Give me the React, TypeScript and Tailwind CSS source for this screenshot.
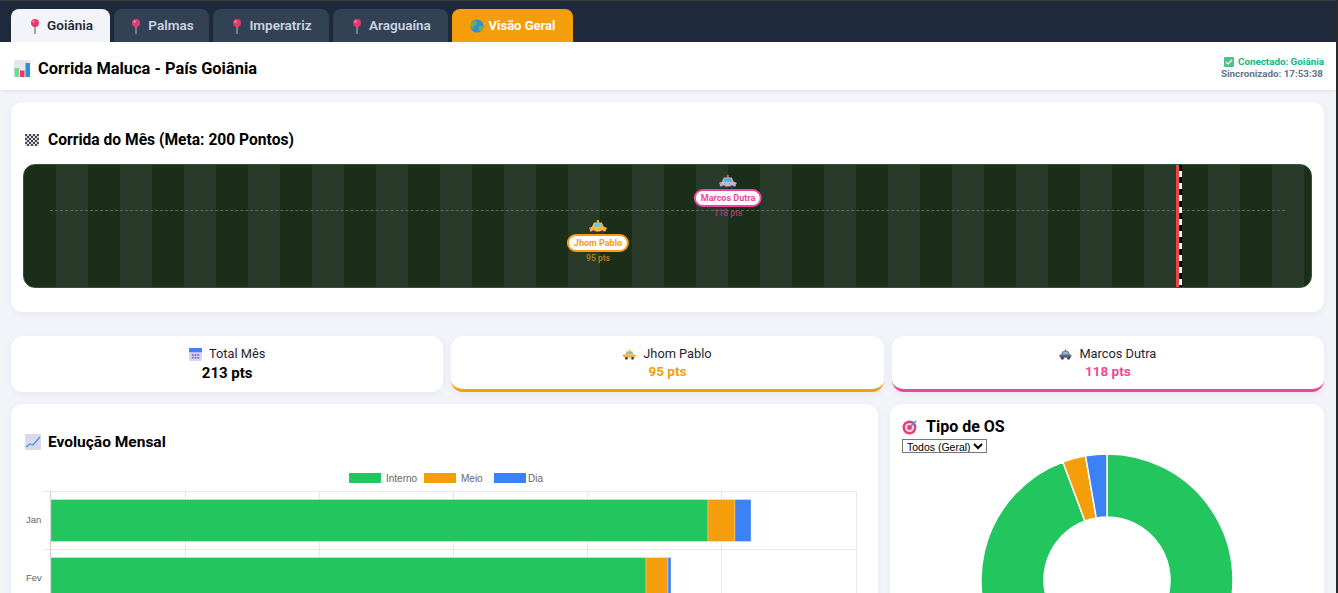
const FONT = "font-['Roboto','Noto_Sans',sans-serif]";

const tabs = [
  { label: "Goiânia", width: "w-[99px]", active: true },
  { label: "Palmas", width: "w-[95px]" },
  { label: "Imperatriz", width: "w-[116px]" },
  { label: "Araguaína", width: "w-[115px]" },
];

const Pin = () => (
  <svg viewBox="0 0 14 16" className="w-[14px] h-[16px] shrink-0">
    <rect x="6.2" y="7" width="1.6" height="9" fill="#8b8f98" />
    <circle cx="7" cy="5" r="4" fill="#e8386d" />
    <circle cx="5.6" cy="3.6" r="1.1" fill="#f9a3bd" />
  </svg>
);

const Globe = () => (
  <svg viewBox="0 0 16 16" className="w-[14px] h-[14px] shrink-0">
    <circle cx="8" cy="8" r="7.5" fill="#2f8fd8" />
    <path d="M3 3c2-1 4-1 5 0s0 3-2 4-1 3-2 4-3-1-3-3 1-4 2-5zM10 8c2-1 4 0 5 1 0 3-2 5-4 5-1-2-2-4-1-6z" fill="#6fb04a" />
  </svg>
);

const Chart = () => (
  <svg viewBox="0 0 16 17" className="w-[16px] h-[17px] shrink-0">
    <rect x="0" y="0" width="16" height="17" rx="1" fill="#e4e6ec" />
    <rect x="0.5" y="8" width="4.5" height="9" fill="#7fd39a" />
    <rect x="6" y="10.5" width="4.5" height="6.5" fill="#e8386d" />
    <rect x="11.5" y="3" width="4.5" height="14" fill="#2f8fd8" />
  </svg>
);

const Flag = () => (
  <svg viewBox="0 0 14 12" className="w-[14px] h-[12px] shrink-0">
    <rect width="14" height="12" fill="#d6d6dc" />
    {[0, 1, 2, 3, 4, 5].map((r) =>
      [0, 1, 2, 3, 4, 5, 6].map((c) =>
        (r + c) % 2 === 0 ? <rect key={`${r}-${c}`} x={c * 2} y={r * 2} width="2" height="2" fill="#4a4a55" /> : null,
      ),
    )}
  </svg>
);

const Calendar = () => (
  <svg viewBox="0 0 14 14" className="w-[13px] h-[13px] shrink-0">
    <rect width="14" height="14" rx="1.5" fill="#d9d5f2" />
    <rect width="14" height="4.5" rx="1" fill="#3b82f6" />
    {[3, 6, 9].map((x) =>
      [6.5, 9.5].map((y) => <rect key={`${x}-${y}`} x={x} y={y} width="2" height="2" fill="#7c72c9" />),
    )}
  </svg>
);

const Trend = () => (
  <svg viewBox="0 0 16 16" className="w-[16px] h-[16px] shrink-0">
    <rect width="16" height="16" rx="1" fill="#dcd8ea" />
    <path d="M1 13l4-3 3 1 7-8" fill="none" stroke="#3b9be8" strokeWidth="1.3" />
  </svg>
);

const Target = () => (
  <svg viewBox="0 0 16 16" className="w-[16px] h-[16px] shrink-0">
    <circle cx="7.5" cy="8.5" r="7" fill="#e0407b" />
    <circle cx="7.5" cy="8.5" r="4.6" fill="#f3d3df" />
    <circle cx="7.5" cy="8.5" r="2.4" fill="#e0407b" />
    <path d="M8 8l6-6" stroke="#3b9be8" strokeWidth="1.6" />
  </svg>
);

const Check = () => (
  <svg viewBox="0 0 10 10" className="w-[10px] h-[10px] shrink-0">
    <rect width="10" height="10" rx="1" fill="#4cc38a" />
    <path d="M2 5l2 2 4-4" fill="none" stroke="#fff" strokeWidth="1.2" />
  </svg>
);

// carro visto de frente: teto, para-brisa, corpo e rodas
const Car = ({ body, glass, top, size = "w-[18px] h-[14px]" }: { body: string; glass: string; top: string; size?: string }) => (
  <svg viewBox="0 0 18 14" className={size}>
    <rect x="8" y="0" width="2" height="3" fill={top} />
    <path d="M5 2.5h8l2 4.5H3z" fill={body} />
    <path d="M6 3.5h6l1.2 3H4.8z" fill={glass} />
    <rect x="1" y="7" width="16" height="4.5" rx="1" fill={body} />
    <rect x="0" y="7.5" width="2" height="1.5" fill="#e85d4a" />
    <rect x="16" y="7.5" width="2" height="1.5" fill="#e8b04a" />
    <rect x="3" y="10.5" width="3.5" height="3.5" rx="1.2" fill="#3a2f55" />
    <rect x="11.5" y="10.5" width="3.5" height="3.5" rx="1.2" fill="#3a2f55" />
  </svg>
);

const Stat = ({ icon, label, value, valueClass, accent }: { icon: React.ReactNode; label: string; value: string; valueClass: string; accent?: string }) => (
  <div className={`h-[56px] bg-white rounded-xl shadow-[0_2px_8px_rgba(0,0,0,0.05)] flex flex-col items-center pt-[9px] ${accent ?? ""}`}>
    <div className="flex items-center gap-[7px] text-[12.8px] leading-[18px] text-[#1f2430]">
      {icon}
      <span>{label}</span>
    </div>
    <div className={`font-bold ${valueClass}`}>{value}</div>
  </div>
);

const months = [
  { label: "Jan", y: 500, green: 657, orange: 27, blue: 16 },
  { label: "Fev", y: 558, green: 595, orange: 22, blue: 3 },
];

const BarChart = () => (
  <svg viewBox="0 0 840 140" className="w-[840px] h-[140px] block font-['Liberation_Sans',sans-serif]">
    <rect x="326" y="2" width="32" height="10" fill="#22c55e" />
    <text x="363" y="11" fontSize="10" fill="#666">Interno</text>
    <rect x="401" y="2" width="32" height="10" fill="#f59e0b" />
    <text x="438" y="11" fontSize="10" fill="#666">Meio</text>
    <rect x="471" y="2" width="32" height="10" fill="#3b82f6" />
    <text x="505" y="11" fontSize="10" fill="#666">Dia</text>
    {[162, 296, 430, 564, 698, 833].map((x) => (
      <line key={x} x1={x + 0.5} y1="20" x2={x + 0.5} y2="140" stroke="#e8e8e8" />
    ))}
    {[20, 78, 136].map((y) => (
      <line key={y} x1="21" y1={y + 0.5} x2="834" y2={y + 0.5} stroke="#e8e8e8" />
    ))}
    <line x1="27.5" y1="20" x2="27.5" y2="140" stroke="#cfcfcf" />
    {months.map((m) => {
      const y = m.y - 471;
      return (
        <g key={m.label} stroke="#ffffff" strokeOpacity="0.3">
          <text x="3" y={y + 23} fontSize="9.5" fill="#666" stroke="none">{m.label}</text>
          <rect x="28" y={y - 0.5} width={m.green} height="42" fill="#22c55e" />
          <rect x={28 + m.green} y={y - 0.5} width={m.orange} height="42" fill="#f59e0b" />
          <rect x={28 + m.green + m.orange} y={y - 0.5} width={m.blue} height="42" fill="#3b82f6" />
        </g>
      );
    })}
  </svg>
);

const slice = (from: number, to: number) => {
  const pt = (r: number, deg: number) => {
    const a = (deg * Math.PI) / 180;
    return `${(126 + r * Math.sin(a)).toFixed(2)} ${(126 - r * Math.cos(a)).toFixed(2)}`;
  };
  const big = to - from > 180 ? 1 : 0;
  return `M${pt(126, from)}A126 126 0 ${big} 1 ${pt(126, to)}L${pt(63, to)}A63 63 0 ${big} 0 ${pt(63, from)}Z`;
};

const Donut = () => (
  <svg viewBox="0 0 252 252" className="w-[252px] h-[252px] block">
    <path d={slice(0, 339.5)} fill="#22c55e" stroke="#fff" strokeWidth="1.5" />
    <path d={slice(339.5, 350.2)} fill="#f59e0b" stroke="#fff" strokeWidth="1.5" />
    <path d={slice(350.2, 360)} fill="#3b82f6" stroke="#fff" strokeWidth="1.5" />
  </svg>
);

export default function App() {
  return (
    <div className={`${FONT} h-screen overflow-hidden bg-[#f3f4f9] text-black border-r-2 border-[#2b2b2b]`}>
      {/* Tabs */}
      <div className="h-[42px] bg-[#1e293b] border-t border-[#3a3a3a] flex items-end gap-1 pl-[11px]">
        {tabs.map((t) => (
          <div
            key={t.label}
            className={`h-[33px] ${t.width} rounded-t-lg flex items-center justify-center gap-[5px] text-[13.5px] font-semibold ${
              t.active ? "bg-[#f3f4f9] text-[#1e293b]" : "bg-[#334155] text-[#cbd5e1]"
            }`}
          >
            <Pin />
            <span>{t.label}</span>
          </div>
        ))}
        <div className="h-[33px] w-[121px] rounded-t-lg bg-[#f59e0b] text-white flex items-center justify-center gap-[5px] text-[13px] font-bold">
          <Globe />
          <span>Visão Geral</span>
        </div>
      </div>

      {/* Header */}
      <div className="h-[48px] bg-white shadow-[0_2px_4px_rgba(0,0,0,0.06)] flex items-center justify-between pl-[14px] pr-3">
        <div className="flex items-center gap-2 text-[16.4px] font-bold mt-[6px]">
          <Chart />
          <span>Corrida Maluca - País Goiânia</span>
        </div>
        <div className="text-[9.8px] leading-[12px] font-bold text-right mt-[4px]">
          <div className="flex items-center justify-end gap-1 text-[#10b981]">
            <Check />
            <span>Conectado: Goiânia</span>
          </div>
          <div className="text-[#64748b] pr-[1px]">Sincronizado: 17:53:38</div>
        </div>
      </div>

      <div className="pl-[11px] pr-3 pt-3">
        {/* Race */}
        <div className="h-[210px] bg-white rounded-xl shadow-[0_2px_8px_rgba(0,0,0,0.05)] pt-[28px] px-3">
          <div className="flex items-center gap-[9px] text-[15.6px] leading-5 font-bold pl-[2px]">
            <Flag />
            <span>Corrida do Mês (Meta: 200 Pontos)</span>
          </div>
          <div className="relative mt-[14px] h-[124px] rounded-xl border border-[#2d5a2d] overflow-hidden bg-[repeating-linear-gradient(90deg,#1a2e1a_0px,#1a2e1a_32px,#2a3a2a_32px,#2a3a2a_64px)]">
            <div className="absolute left-[26px] right-[26px] top-[45px] border-t border-dashed border-[#5a6b5a]" />
            <div className="absolute top-0 bottom-0 left-[1152px] w-[6px] border-l-[3px] border-[#ef4444] bg-[repeating-linear-gradient(180deg,#000_0px,#000_6px,#fff_6px,#fff_12px)]" />

            <div className="absolute left-[574px] -translate-x-1/2 top-[55px] flex flex-col items-center">
              <Car body="#f5b942" glass="#6cc5e8" top="#e8b04a" />
              <div className="bg-white border-2 border-[#f59e0b] rounded-full px-[5px] text-[9px] leading-[14px] font-bold text-[#f59e0b] whitespace-nowrap">Jhom Pablo</div>
              <div className="mt-[1px] text-[8.5px] leading-[11px] font-semibold text-[#b97a10]">95 pts</div>
            </div>
            <div className="absolute left-[704px] -translate-x-1/2 top-[10px] flex flex-col items-center">
              <Car body="#b9b9c6" glass="#4aa8e8" top="#e85d4a" />
              <div className="bg-white border-2 border-[#ec4899] rounded-full px-[5px] text-[9px] leading-[14px] font-bold text-[#ec4899] whitespace-nowrap">Marcos Dutra</div>
              <div className="mt-[1px] text-[8.5px] leading-[11px] font-semibold text-[#a33a6e]">118 pts</div>
            </div>
          </div>
        </div>

        {/* Stats */}
        <div className="grid grid-cols-3 gap-2 mt-6">
          <Stat icon={<Calendar />} label="Total Mês" value="213 pts" valueClass="text-[15px] leading-[20px] text-black" />
          <Stat icon={<Car body="#f5b942" glass="#6cc5e8" top="#e8b04a" size="w-[13px] h-[11px]" />} label="Jhom Pablo" value="95 pts" valueClass="text-[13.5px] leading-[17px] text-[#f59e0b]" accent="border-b-[3px] border-[#f59e0b]" />
          <Stat icon={<Car body="#5b6478" glass="#8fb6e0" top="#5b6478" size="w-[13px] h-[11px]" />} label="Marcos Dutra" value="118 pts" valueClass="text-[13.5px] leading-[17px] text-[#ec4899]" accent="border-b-[3px] border-[#ec4899]" />
        </div>

        {/* Charts */}
        <div className="grid grid-cols-[867px_434px] gap-3 mt-3">
          <div className="h-[300px] bg-white rounded-xl shadow-[0_2px_8px_rgba(0,0,0,0.05)] pt-[28px] px-[14px]">
            <div className="flex items-center gap-[7px] text-[15.5px] leading-5 font-bold">
              <Trend />
              <span>Evolução Mensal</span>
            </div>
            <div className="mt-[19px] ml-[-2px]">
              <BarChart />
            </div>
          </div>
          <div className="h-[300px] bg-white rounded-xl shadow-[0_2px_8px_rgba(0,0,0,0.05)] pt-[13px] px-3">
            <div className="flex items-center gap-[8px] text-[16px] leading-5 font-bold">
              <Target />
              <span>Tipo de OS</span>
            </div>
            <select className="block mt-[2px] h-[14px] w-[85px] font-['Liberation_Sans',sans-serif] text-[10.5px] leading-none border border-[#767676] bg-white text-black">
              <option>Todos (Geral)</option>
            </select>
            <div className="flex justify-center mt-[1px]">
              <Donut />
            </div>
          </div>
        </div>
      </div>
    </div>
  );
}
